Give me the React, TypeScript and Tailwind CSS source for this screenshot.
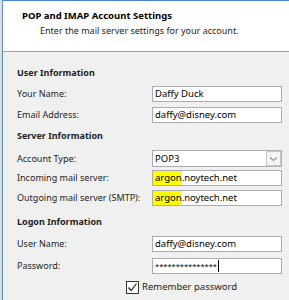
import React from "react";

const font = { fontFamily: '"Noto Sans", "Open Sans", sans-serif' };

function Field({ label, children, mt }: { label: string; children: React.ReactNode; mt: string }) {
  return (
    <div className={`flex items-center shrink-0 ${mt}`}>
      <div className="w-[149px] shrink-0 pl-[14px] text-[9px] leading-[16px] whitespace-nowrap text-[#1e1e1e]">{label}</div>
      <div className="w-[130px] h-[16px] shrink-0 border border-[#abadb3] bg-white flex items-center pl-[2px] text-[9.5px] leading-[14px] whitespace-nowrap text-black">
        {children}
      </div>
    </div>
  );
}

function Heading({ children, mt }: { children: React.ReactNode; mt: string }) {
  return <div className={`shrink-0 pl-[14px] text-[9px] leading-[16px] font-bold text-[#1e1e1e] ${mt}`}>{children}</div>;
}

function Hl({ children }: { children: React.ReactNode }) {
  return <span className="inline-block bg-[#ffff00] -ml-[2px] pl-[2px] h-[14px] leading-[14px]">{children}</span>;
}

export default function App() {
  return (
    <div className="w-[289px] h-[300px] overflow-hidden flex bg-[#f0f0f0]" style={font}>
      <div className="w-[2px] h-full shrink-0 bg-[#dcdcdc]" />
      <div className="w-[1px] h-full shrink-0 bg-[#5b8fd0]" />
      <div className="flex-1 flex flex-col">
        <div className="h-[1px] shrink-0 bg-[#4a86d0]" />
        <div className="h-[51px] shrink-0 bg-white border-b border-[#a0a0a0]">
          <div className="pl-[19px] pt-[8px] text-[9.5px] leading-[14px] font-bold text-black whitespace-nowrap">POP and IMAP Account Settings</div>
          <div className="pl-[37px] pt-[1px] text-[9px] leading-[14px] text-[#1e1e1e] whitespace-nowrap">Enter the mail server settings for your account.</div>
        </div>
        <div className="flex flex-col">
          <Heading mt="mt-[13px]">User Information</Heading>
          <Field label="Your Name:" mt="mt-[5px]">Daffy Duck</Field>
          <Field label="Email Address:" mt="mt-[5px]">daffy@disney.com</Field>
          <Heading mt="mt-[5px]">Server Information</Heading>
          <div className="flex items-center shrink-0 mt-[6px]">
            <div className="w-[149px] shrink-0 pl-[14px] text-[9px] leading-[16px] text-[#1e1e1e]">Account Type:</div>
            <div className="w-[130px] h-[17px] shrink-0 border border-[#abadb3] bg-white flex items-center">
              <div className="flex-1 pl-[2px] text-[9.5px] leading-[14px] text-black">POP3</div>
              <div className="w-[15px] h-[15px] border border-[#c8c8c8] bg-[#f4f4f4] flex items-center justify-center">
                <svg width="9" height="6" viewBox="0 0 9 6">
                  <path d="M1 1.5 L4.5 4.5 L8 1.5" fill="none" stroke="#606060" strokeWidth="1" />
                </svg>
              </div>
            </div>
          </div>
          <Field label="Incoming mail server:" mt="mt-[3px]">
            <Hl>argon</Hl>.noytech.net
          </Field>
          <Field label="Outgoing mail server (SMTP):" mt="mt-[4px]">
            <Hl>argon</Hl>.noytech.net
          </Field>
          <Heading mt="mt-[8px]">Logon Information</Heading>
          <Field label="User Name:" mt="mt-[6px]">daffy@disney.com</Field>
          <Field label="Password:" mt="mt-[6px]">
            <span className="text-[7.5px] leading-[14px]">***************</span>
            <span className="inline-block w-[1px] h-[12px] bg-black ml-[1px]" />
          </Field>
          <div className="flex items-center shrink-0 mt-[5px] pl-[123px]">
            <div className="w-[13px] h-[13px] border border-[#333] bg-white flex items-center justify-center">
              <svg width="11" height="11" viewBox="0 0 11 11">
                <path d="M1.5 5.5 L4 8.5 L9.5 1.5" fill="none" stroke="#222" strokeWidth="1.2" />
              </svg>
            </div>
            <div className="ml-[3px] text-[9.5px] leading-[16px] text-[#1e1e1e]">Remember password</div>
          </div>
        </div>
      </div>
    </div>
  );
}
